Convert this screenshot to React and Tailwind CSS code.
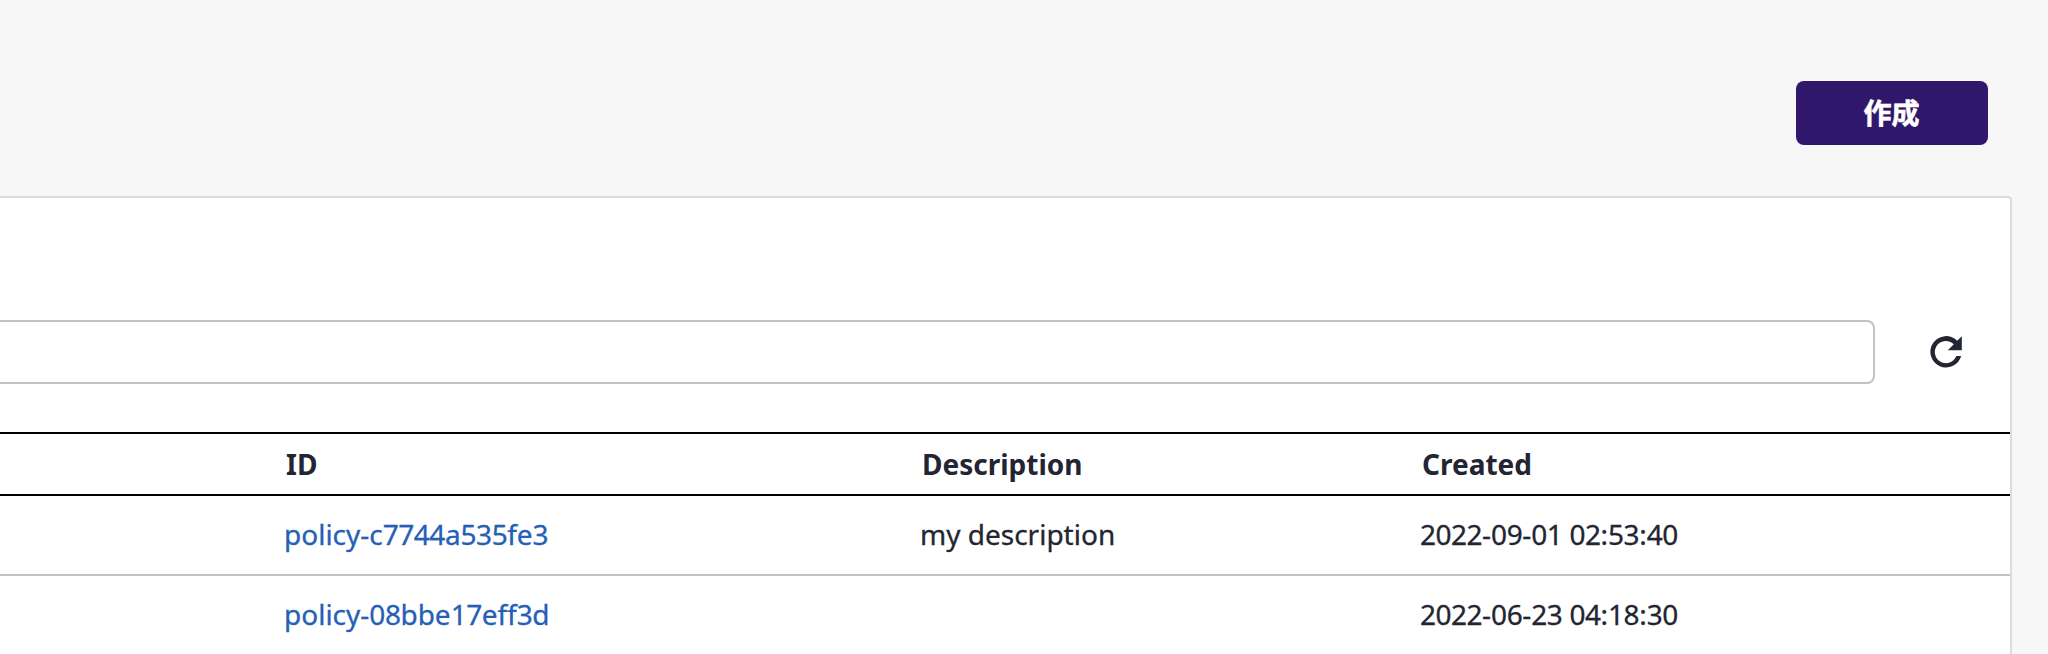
const rows = [
  { id: "policy-c7744a535fe3", description: "my description", created: "2022-09-01 02:53:40" },
  { id: "policy-08bbe17eff3d", description: "", created: "2022-06-23 04:18:30" },
];

const cols = "grid grid-cols-[284px_636px_500px_1fr]";

// Sets runs of digits slightly tighter than the letters around them.
function Tight({ text }) {
  return text.split(/(\d+)/).map((part, i) =>
    i % 2 ? <span key={i} className="tracking-[-0.5px]">{part}</span> : part
  );
}

export default function App() {
  return (
    <div className="flex h-[654px] w-full flex-col overflow-hidden bg-[#f7f7f7] font-['Noto_Sans','Noto_Sans_CJK_JP',sans-serif] text-[28px] text-[#232532]">
      <header className="flex h-[196px] shrink-0 justify-end pr-[60px] pt-[81px]">
        <button className="flex h-16 w-48 items-center justify-center rounded-lg bg-[#30176b] pr-px font-bold text-white [-webkit-text-stroke:0.6px_white]">作成</button>
      </header>
      <main className="mr-9 flex-1 rounded-tr border-r-2 border-t-2 border-[#dcdcdc] bg-white">
        <div className="flex h-[234px] pt-[122px]">
          <div className="h-16 w-[1875px] rounded-r-lg border-2 border-l-0 border-[#c1c1c6]" />
          <button className="ml-[47px] flex h-16 w-12 items-center justify-center">
            <svg viewBox="0 0 24 24" className="size-12" fill="currentColor">
              <path d="M17.6 6.35A7.85 7.85 0 1 0 19.6 14H17.15A5.55 5.55 0 1 1 15.9 8.1L12.9 11.15H19.9V4.1z" />
            </svg>
          </button>
        </div>
        <div className={`${cols} h-16 items-center border-y-2 border-black font-bold`}>
          <span />
          <span className="pl-[2px]">ID</span>
          <span className="pl-[2px]">Description</span>
          <span className="pl-[2px]">Created</span>
        </div>
        {rows.map((r) => (
          <div key={r.id} className={`${cols} h-20 items-center border-b-2 border-[#c1c1c6] pb-[3px] [-webkit-text-stroke:0.3px_currentColor]`}>
            <span />
            <a className="text-[#2660b5]"><Tight text={r.id} /></a>
            <span>{r.description}</span>
            <span><Tight text={r.created} /></span>
          </div>
        ))}
      </main>
    </div>
  );
}
